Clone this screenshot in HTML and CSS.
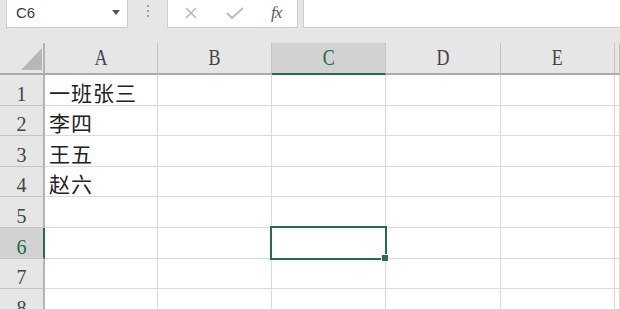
FILE: index.html
```html
<!DOCTYPE html>
<html lang="zh-CN">

<head>
    <meta charset="UTF-8">
    <meta name="viewport" content="width=device-width, initial-scale=1.0">
    <title>工作表</title>
    <link rel="stylesheet" href="styles.css">
</head>

<body>

    <!-- 编辑栏 -->
    <div class="topbar">
        <div class="namebox">
            <span class="name">C6</span>
            <span class="caret"></span>
        </div>
        <div class="grip"><i></i><i></i><i></i></div>
        <div class="fxbox">
            <svg class="ico" width="14" height="12" viewBox="0 0 14 12">
                <path d="M2 1 L12 11 M12 1 L2 11" stroke="#b9b9b9" stroke-width="1.6" fill="none" />
            </svg>
            <svg class="ico" width="18" height="12" viewBox="0 0 18 12">
                <path d="M1 6 L6 11 L17 1" stroke="#b9b9b9" stroke-width="1.8" fill="none" />
            </svg>
            <span class="fx">fx</span>
        </div>
        <div class="formula"></div>
    </div>

    <!-- 表格 -->
    <div class="sheet">
        <div class="corner"><span class="tri"></span></div>
        <div class="col"><span>A</span></div>
        <div class="col"><span>B</span></div>
        <div class="col on"><span>C</span></div>
        <div class="col"><span>D</span></div>
        <div class="col"><span>E</span></div>
        <div class="col"></div>

        <div class="row">1</div>
        <div class="cell">一班张三</div><div class="cell"></div><div class="cell"></div><div class="cell"></div><div class="cell"></div><div class="cell"></div>

        <div class="row">2</div>
        <div class="cell">李四</div><div class="cell"></div><div class="cell"></div><div class="cell"></div><div class="cell"></div><div class="cell"></div>

        <div class="row">3</div>
        <div class="cell">王五</div><div class="cell"></div><div class="cell"></div><div class="cell"></div><div class="cell"></div><div class="cell"></div>

        <div class="row">4</div>
        <div class="cell">赵六</div><div class="cell"></div><div class="cell"></div><div class="cell"></div><div class="cell"></div><div class="cell"></div>

        <div class="row">5</div>
        <div class="cell"></div><div class="cell"></div><div class="cell"></div><div class="cell"></div><div class="cell"></div><div class="cell"></div>

        <div class="row on">6</div>
        <div class="cell"></div><div class="cell"></div><div class="cell active"></div><div class="cell"></div><div class="cell"></div><div class="cell"></div>

        <div class="row">7</div>
        <div class="cell"></div><div class="cell"></div><div class="cell"></div><div class="cell"></div><div class="cell"></div><div class="cell"></div>

        <div class="row">8</div>
        <div class="cell"></div><div class="cell"></div><div class="cell"></div><div class="cell"></div><div class="cell"></div><div class="cell"></div>
    </div>

</body>

</html>
```

FILE: styles.css
```css
* {
    margin: 0;
    padding: 0;
    box-sizing: border-box;
}

body {
    width: 620px;
    height: 309px;
    overflow: hidden;
    background: #e6e6e6;
    font-family: "Liberation Serif", "Noto Sans CJK SC", serif;
}

/* 编辑栏 */
.topbar {
    display: flex;
    align-items: flex-start;
    height: 43px;
    padding-left: 6px;
}

.namebox {
    display: flex;
    align-items: center;
    justify-content: space-between;
    width: 122px;
    height: 28px;
    padding: 0 7px 2px 9px;
    background: #fff;
    border: 1px solid #cdcdcd;
    border-top: none;
}

.name {
    font-family: "Liberation Sans", sans-serif;
    font-size: 15px;
    color: #3c3c3c;
}

.caret {
    width: 0;
    height: 0;
    border-left: 4px solid transparent;
    border-right: 4px solid transparent;
    border-top: 5px solid #555;
}

.grip {
    display: flex;
    flex-direction: column;
    align-items: center;
    gap: 3px;
    width: 39px;
    padding-top: 5px;
}

.grip i {
    width: 2px;
    height: 2px;
    background: #a0a0a0;
}

.fxbox {
    display: flex;
    align-items: center;
    width: 131px;
    height: 28px;
    padding: 0 0 2px 16px;
    background: #fff;
    border: 1px solid #cdcdcd;
    border-top: none;
}

.fxbox .ico {
    margin-right: 28px;
}

.fxbox .ico + .ico {
    margin-right: 27px;
}

.fx {
    font-family: "Liberation Serif", serif;
    font-style: italic;
    font-size: 17px;
    letter-spacing: -1px;
    color: #5a5a5a;
}

.formula {
    flex: 1;
    height: 28px;
    margin-left: 5px;
    background: #fff;
    border: 1px solid #cdcdcd;
    border-top: none;
    border-right: none;
}

/* 表格 */
.sheet {
    display: grid;
    grid-template-columns: 45px 113px repeat(4, 114.2px) 1fr;
    grid-template-rows: 32px repeat(8, 30.6px);
}

.corner {
    position: relative;
    border-right: 2px solid #b4b4b4;
    border-bottom: 2px solid #ababab;
}

.tri {
    position: absolute;
    right: 1px;
    bottom: 3px;
    width: 0;
    height: 0;
    border-left: 21px solid transparent;
    border-bottom: 22px solid #b7b7b7;
}

.col {
    display: flex;
    align-items: flex-end;
    justify-content: center;
    padding-bottom: 4px;
    font-size: 18px;
    line-height: 1;
    color: #444;
    border-right: 1px solid #c4c4c4;
    border-bottom: 2px solid #ababab;
}

.col span {
    display: inline-block;
    transform: scaleY(1.3);
    transform-origin: bottom;
}

.col.on {
    background: #d2d2d2;
    color: #1d6b42;
    border-bottom-color: #217346;
}

.row {
    display: flex;
    align-items: flex-end;
    justify-content: center;
    padding-bottom: 1px;
    font-size: 20px;
    line-height: 1;
    color: #444;
    border-right: 2px solid #b4b4b4;
    border-bottom: 1px solid #c4c4c4;
}

.row.on {
    background: #d2d2d2;
    color: #1d6b42;
    border-right-color: #217346;
}

.cell {
    display: flex;
    align-items: flex-end;
    padding: 0 0 2px 4px;
    background: #fff;
    font-family: "Noto Sans CJK SC", sans-serif;
    font-size: 21px;
    line-height: 1;
    letter-spacing: 1px;
    color: #222;
    border-right: 1px solid #dadada;
    border-bottom: 1px solid #dadada;
}

/* 当前单元格 */
.cell.active {
    position: relative;
}

.cell.active::before {
    content: "";
    position: absolute;
    left: -2px;
    top: -2px;
    right: -2px;
    bottom: -2px;
    border: 2px solid #217346;
}

.cell.active::after {
    content: "";
    position: absolute;
    right: -4px;
    bottom: -4px;
    width: 6px;
    height: 6px;
    background: #217346;
    border: 1px solid #fff;
}
```
